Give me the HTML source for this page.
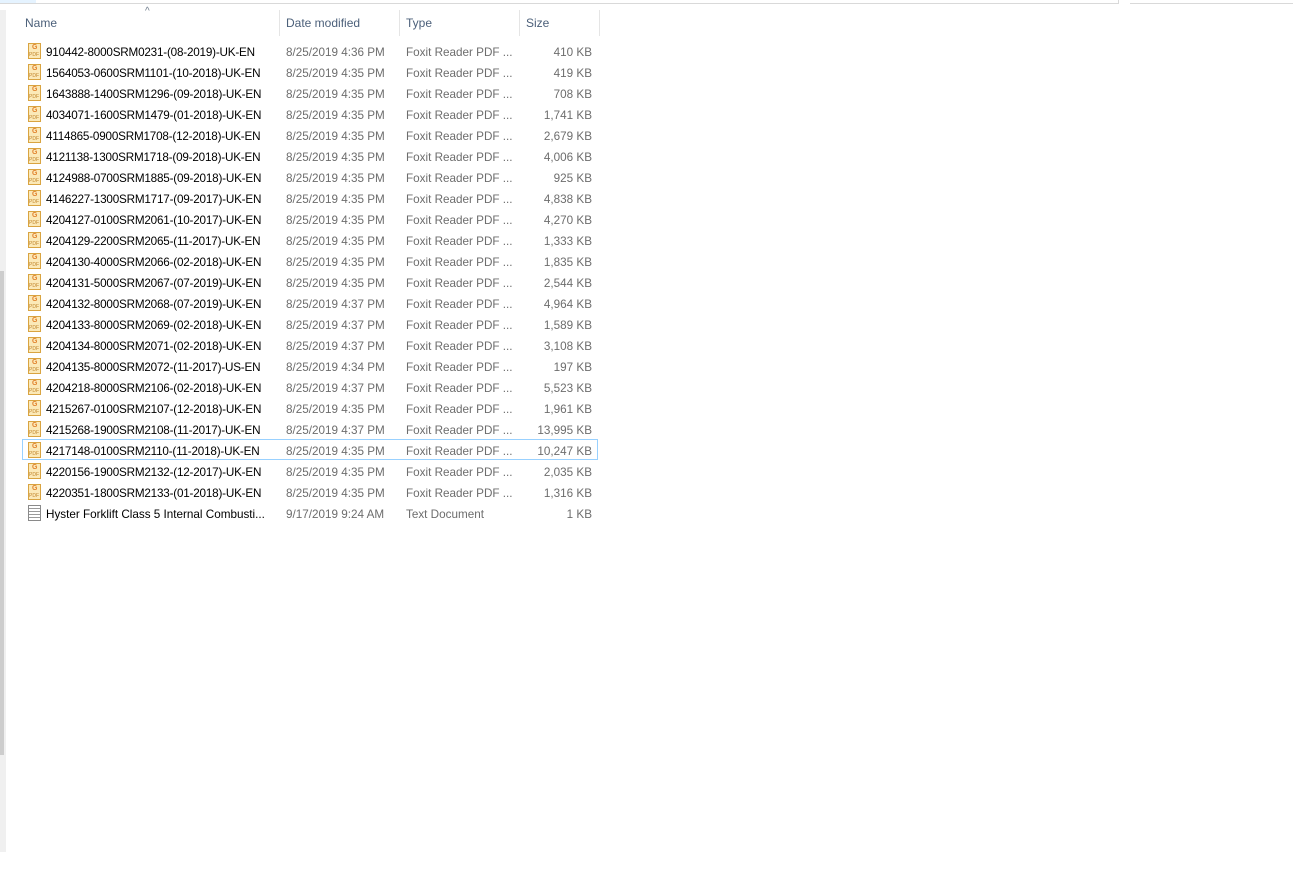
<!DOCTYPE html>
<html><head><meta charset="utf-8"><style>
*{margin:0;padding:0;box-sizing:border-box}
body{width:1293px;height:872px;background:#fff;position:relative;overflow:hidden;font-family:"Liberation Sans",sans-serif;font-size:12px;color:#000}
.abs{position:absolute}
.hdr{position:absolute;top:16px;color:#4c607a;font-size:12px}
.sep{position:absolute;top:10px;width:1px;height:26px;background:#e5e5e5}
.row{position:absolute;left:22px;width:576px;height:21px}
.row span{position:absolute;top:5.5px;white-space:nowrap;font-size:11.7px}
.n{left:24px}
.d{left:264px;color:#6d6d6d}
.t{left:384px;color:#6d6d6d}
.s{right:6px;color:#6d6d6d}
.ic{position:absolute;left:6px;top:3px;width:13px;height:16px;border:1px solid #d9a441;background:#fbe9b8}
.ic:before{content:"G";position:absolute;left:3px;top:0px;font-size:7px;color:#e0802a;font-weight:bold}
.ic:after{content:"PDF";position:absolute;left:0px;top:8px;font-size:5px;color:#c0842a}
.tx{position:absolute;left:6px;top:3px;width:13px;height:16px;border:1px solid #8a8a8a;background:repeating-linear-gradient(#fff 0 2px,#9a9a9a 2px 3px)}
.sel{box-shadow:inset 0 0 0 1px #99d1ff}
</style></head><body>
<div class="abs" style="left:0;top:0;width:36px;height:3px;background:#e5f3ff"></div>
<div class="abs" style="left:0;top:3px;width:1118px;height:1px;background:#d9d9d9"></div>
<div class="abs" style="left:1130px;top:3px;width:163px;height:1px;background:#d9d9d9"></div>
<div class="abs" style="left:1118px;top:0;width:1px;height:4px;background:#d9d9d9"></div>
<div class="abs" style="left:0;top:10px;width:6px;height:842px;background:#f0f0f0"></div>
<div class="abs" style="left:0;top:271px;width:4px;height:484px;background:#cdcdcd"></div>
<div class="abs" style="left:145px;top:6px;color:#6d7a8a;font-size:10px">^</div>
<div class="hdr" style="left:25px">Name</div>
<div class="hdr" style="left:286px">Date modified</div>
<div class="hdr" style="left:406px">Type</div>
<div class="hdr" style="left:526px">Size</div>
<div class="sep" style="left:279px"></div>
<div class="sep" style="left:399px"></div>
<div class="sep" style="left:519px"></div>
<div class="sep" style="left:599px"></div>
<div id="rows"></div>
<script>
var r=[["910442-8000SRM0231-(08-2019)-UK-EN","4:36","410 KB"],["1564053-0600SRM1101-(10-2018)-UK-EN","4:35","419 KB"],["1643888-1400SRM1296-(09-2018)-UK-EN","4:35","708 KB"],["4034071-1600SRM1479-(01-2018)-UK-EN","4:35","1,741 KB"],["4114865-0900SRM1708-(12-2018)-UK-EN","4:35","2,679 KB"],["4121138-1300SRM1718-(09-2018)-UK-EN","4:35","4,006 KB"],["4124988-0700SRM1885-(09-2018)-UK-EN","4:35","925 KB"],["4146227-1300SRM1717-(09-2017)-UK-EN","4:35","4,838 KB"],["4204127-0100SRM2061-(10-2017)-UK-EN","4:35","4,270 KB"],["4204129-2200SRM2065-(11-2017)-UK-EN","4:35","1,333 KB"],["4204130-4000SRM2066-(02-2018)-UK-EN","4:35","1,835 KB"],["4204131-5000SRM2067-(07-2019)-UK-EN","4:35","2,544 KB"],["4204132-8000SRM2068-(07-2019)-UK-EN","4:37","4,964 KB"],["4204133-8000SRM2069-(02-2018)-UK-EN","4:37","1,589 KB"],["4204134-8000SRM2071-(02-2018)-UK-EN","4:37","3,108 KB"],["4204135-8000SRM2072-(11-2017)-US-EN","4:34","197 KB"],["4204218-8000SRM2106-(02-2018)-UK-EN","4:37","5,523 KB"],["4215267-0100SRM2107-(12-2018)-UK-EN","4:35","1,961 KB"],["4215268-1900SRM2108-(11-2017)-UK-EN","4:37","13,995 KB"],["4217148-0100SRM2110-(11-2018)-UK-EN","4:35","10,247 KB"],["4220156-1900SRM2132-(12-2017)-UK-EN","4:35","2,035 KB"],["4220351-1800SRM2133-(01-2018)-UK-EN","4:35","1,316 KB"]];
var h="";
r.forEach(function(x,i){h+='<div class="row'+(i==19?' sel':'')+'" style="top:'+(40+21*i)+'px"><div class="ic"></div><span class="n" style="letter-spacing:-0.2px">'+x[0]+'</span><span class="d">8/25/2019 '+x[1]+' PM</span><span class="t">Foxit Reader PDF ...</span><span class="s">'+x[2]+'</span></div>';});
h+='<div class="row" style="top:'+(40+21*22)+'px"><div class="tx"></div><span class="n">Hyster Forklift Class 5 Internal Combusti...</span><span class="d">9/17/2019 9:24 AM</span><span class="t">Text Document</span><span class="s">1 KB</span></div>';
document.getElementById("rows").innerHTML=h;
</script>
</body></html>
